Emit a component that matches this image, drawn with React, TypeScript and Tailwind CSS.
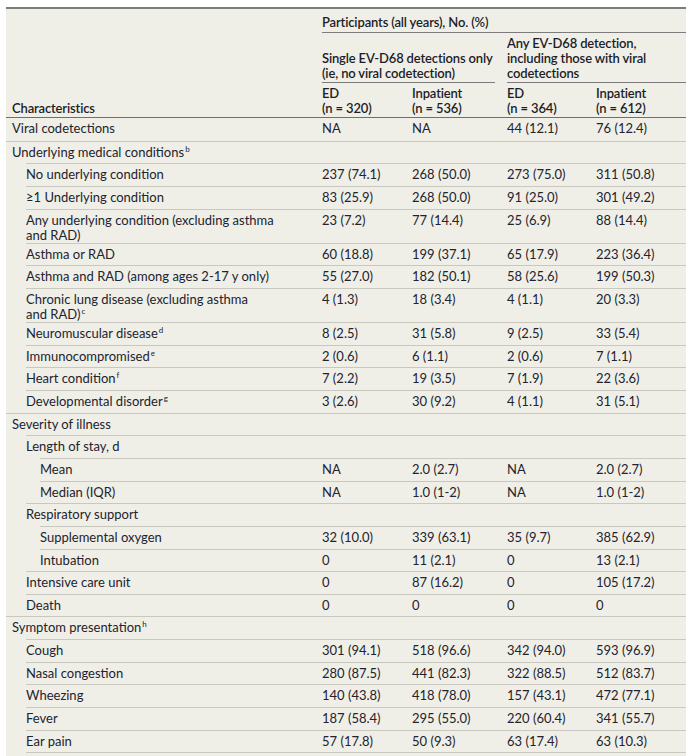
import React from 'react';

type Row = {
  label: React.ReactNode;
  level: 0 | 1 | 2;
  vals?: string[];
};

const sup = (s: string) => (
  <sup className="relative -top-[5px] ml-[1px] text-[8px] leading-none">{s}</sup>
);

const rows: Row[] = [
  { label: 'Viral codetections', level: 0, vals: ['NA', 'NA', '44 (12.1)', '76 (12.4)'] },
  { label: <>Underlying medical conditions{sup('b')}</>, level: 0 },
  { label: 'No underlying condition', level: 1, vals: ['237 (74.1)', '268 (50.0)', '273 (75.0)', '311 (50.8)'] },
  { label: '≥1 Underlying condition', level: 1, vals: ['83 (25.9)', '268 (50.0)', '91 (25.0)', '301 (49.2)'] },
  {
    label: <>Any underlying condition (excluding asthma<br />and RAD)</>,
    level: 1,
    vals: ['23 (7.2)', '77 (14.4)', '25 (6.9)', '88 (14.4)'],
  },
  { label: 'Asthma or RAD', level: 1, vals: ['60 (18.8)', '199 (37.1)', '65 (17.9)', '223 (36.4)'] },
  { label: 'Asthma and RAD (among ages 2-17 y only)', level: 1, vals: ['55 (27.0)', '182 (50.1)', '58 (25.6)', '199 (50.3)'] },
  {
    label: <>Chronic lung disease (excluding asthma<br />and RAD){sup('c')}</>,
    level: 1,
    vals: ['4 (1.3)', '18 (3.4)', '4 (1.1)', '20 (3.3)'],
  },
  { label: <>Neuromuscular disease{sup('d')}</>, level: 1, vals: ['8 (2.5)', '31 (5.8)', '9 (2.5)', '33 (5.4)'] },
  { label: <>Immunocompromised{sup('e')}</>, level: 1, vals: ['2 (0.6)', '6 (1.1)', '2 (0.6)', '7 (1.1)'] },
  { label: <>Heart condition{sup('f')}</>, level: 1, vals: ['7 (2.2)', '19 (3.5)', '7 (1.9)', '22 (3.6)'] },
  { label: <>Developmental disorder{sup('g')}</>, level: 1, vals: ['3 (2.6)', '30 (9.2)', '4 (1.1)', '31 (5.1)'] },
  { label: 'Severity of illness', level: 0 },
  { label: 'Length of stay, d', level: 1 },
  { label: 'Mean', level: 2, vals: ['NA', '2.0 (2.7)', 'NA', '2.0 (2.7)'] },
  { label: 'Median (IQR)', level: 2, vals: ['NA', '1.0 (1-2)', 'NA', '1.0 (1-2)'] },
  { label: 'Respiratory support', level: 1 },
  { label: 'Supplemental oxygen', level: 2, vals: ['32 (10.0)', '339 (63.1)', '35 (9.7)', '385 (62.9)'] },
  { label: 'Intubation', level: 2, vals: ['0', '11 (2.1)', '0', '13 (2.1)'] },
  { label: 'Intensive care unit', level: 1, vals: ['0', '87 (16.2)', '0', '105 (17.2)'] },
  { label: 'Death', level: 1, vals: ['0', '0', '0', '0'] },
  { label: <>Symptom presentation{sup('h')}</>, level: 0 },
  { label: 'Cough', level: 1, vals: ['301 (94.1)', '518 (96.6)', '342 (94.0)', '593 (96.9)'] },
  { label: 'Nasal congestion', level: 1, vals: ['280 (87.5)', '441 (82.3)', '322 (88.5)', '512 (83.7)'] },
  { label: 'Wheezing', level: 1, vals: ['140 (43.8)', '418 (78.0)', '157 (43.1)', '472 (77.1)'] },
  { label: 'Fever', level: 1, vals: ['187 (58.4)', '295 (55.0)', '220 (60.4)', '341 (55.7)'] },
  { label: 'Ear pain', level: 1, vals: ['57 (17.8)', '50 (9.3)', '63 (17.4)', '63 (10.3)'] },
];

const colW = ['w-[90px]', 'w-[95px]', 'w-[89px]', 'w-[96px]'];

// indent of the row rule and the width left for the label cell
const indent = {
  0: { outer: 'pl-0', label: 'w-[310px] pl-[6px]' },
  1: { outer: 'pl-[20px]', label: 'w-[290px]' },
  2: { outer: 'pl-[34px]', label: 'w-[276px]' },
};

function BodyRow({ row, first }: { row: Row; first: boolean }) {
  const ind = indent[row.level];
  return (
    <div className={ind.outer}>
      <div
        className={`flex min-h-[22.67px] pt-[3px] ${first ? '' : 'border-t border-[#c9c8c0]'}`}
      >
        <div className={ind.label}>{row.label}</div>
        {colW.map((w, i) => (
          <div key={i} className={`${w} pl-[6px]`}>
            {row.vals ? row.vals[i] : ''}
          </div>
        ))}
      </div>
    </div>
  );
}

export default function App() {
  return (
    <div className="min-h-[756px] bg-white px-[6px] pt-[7px] font-['Lato','Liberation_Sans',sans-serif] text-[13px] leading-[15px] text-[#22232e]">
      <div className="w-[680px] border-t-2 border-[#7c7c7c] bg-[#f0efe7]">
        {/* header */}
        <div className="flex border-b border-[#6f6f6f] font-semibold tracking-[-0.15px] whitespace-nowrap text-[#1c1d28]">
          <div className="flex w-[310px] items-end pb-[1px] pl-[6px]">Characteristics</div>
          <div className="w-[370px]">
            <div className="ml-[6px] h-[24px] border-b border-[#7c7c7c] pt-[6px]">
              Participants (all years), No. (%)
            </div>
            <div className="flex">
              <div className="ml-[6px] mr-[6px] flex h-[50px] w-[173px] flex-col justify-end border-b border-[#7c7c7c] pb-[1px]">
                <span>Single EV-D68 detections only</span>
                <span>(ie, no viral codetection)</span>
              </div>
              <div className="ml-[6px] flex h-[50px] flex-1 flex-col justify-end border-b border-[#7c7c7c] pb-[1px]">
                <span>Any EV-D68 detection,</span>
                <span>including those with viral</span>
                <span>codetections</span>
              </div>
            </div>
            <div className="flex h-[34px] pt-[3px]">
              {[
                ['ED', '(n = 320)'],
                ['Inpatient', '(n = 536)'],
                ['ED', '(n = 364)'],
                ['Inpatient', '(n = 612)'],
              ].map(([a, b], i) => (
                <div key={i} className={`${colW[i]} pl-[6px]`}>
                  <div>{a}</div>
                  <div>{b}</div>
                </div>
              ))}
            </div>
          </div>
        </div>
        {/* body */}
        {rows.map((r, i) => (
          <BodyRow key={i} row={r} first={i === 0} />
        ))}
        <div className="h-[10px] pl-[20px]">
          <div className="h-full border-t border-[#c9c8c0]" />
        </div>
      </div>
    </div>
  );
}
